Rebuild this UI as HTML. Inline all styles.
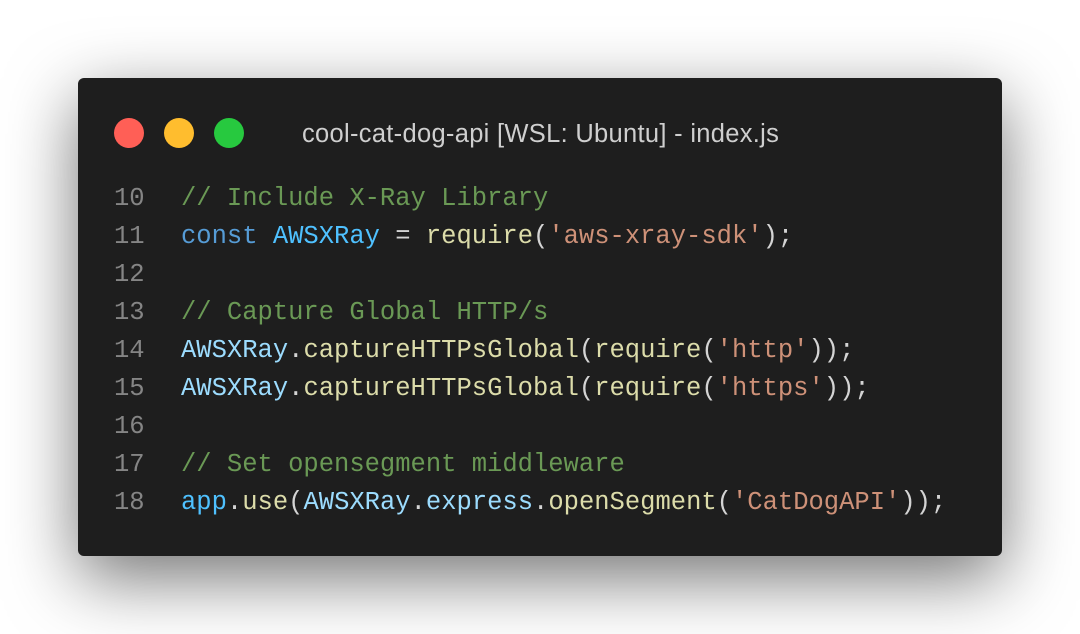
<!DOCTYPE html>
<html><head><style>
html,body{margin:0;padding:0;width:1080px;height:634px;overflow:hidden;background:#fff;}
.win{position:absolute;left:78px;top:78px;width:924px;height:478px;background:#1e1e1e;border-radius:6px;box-shadow:0 22px 70px rgba(0,0,0,0.55);}
.dot{position:absolute;top:40px;width:30px;height:30px;border-radius:50%;}
.title{position:absolute;left:224px;top:39px;font-family:"Liberation Sans","DejaVu Sans",sans-serif;font-size:25.5px;color:#cfcfcf;line-height:34px;letter-spacing:0.3px;}
.code{position:absolute;left:0;top:102px;font-family:"Liberation Mono","DejaVu Sans Mono",monospace;font-size:25.5px;line-height:38px;white-space:pre;color:#d4d4d4;}
.ln{display:inline-block;width:103px;padding-left:36px;box-sizing:border-box;color:#858585;}
.c{color:#6a9955}.k{color:#569cd6}.cn{color:#4fc1ff}.f{color:#dcdcaa}.s{color:#ce9178}.v{color:#9cdcfe}
</style></head><body>
<div class="win">
<div class="dot" style="left:36px;background:#ff5f56"></div>
<div class="dot" style="left:86px;background:#ffbd2e"></div>
<div class="dot" style="left:136px;background:#27c93f"></div>
<div class="title">cool-cat-dog-api [WSL: Ubuntu] - index.js</div>
<div class="code"><span class="ln">10</span><span class="c">// Include X-Ray Library</span>
<span class="ln">11</span><span class="k">const</span> <span class="cn">AWSXRay</span> = <span class="f">require</span>(<span class="s">'aws-xray-sdk'</span>);
<span class="ln">12</span>
<span class="ln">13</span><span class="c">// Capture Global HTTP/s</span>
<span class="ln">14</span><span class="v">AWSXRay</span>.<span class="f">captureHTTPsGlobal</span>(<span class="f">require</span>(<span class="s">'http'</span>));
<span class="ln">15</span><span class="v">AWSXRay</span>.<span class="f">captureHTTPsGlobal</span>(<span class="f">require</span>(<span class="s">'https'</span>));
<span class="ln">16</span>
<span class="ln">17</span><span class="c">// Set opensegment middleware</span>
<span class="ln">18</span><span class="cn">app</span>.<span class="f">use</span>(<span class="v">AWSXRay</span>.<span class="v">express</span>.<span class="f">openSegment</span>(<span class="s">'CatDogAPI'</span>));</div>
</div>
</body></html>
